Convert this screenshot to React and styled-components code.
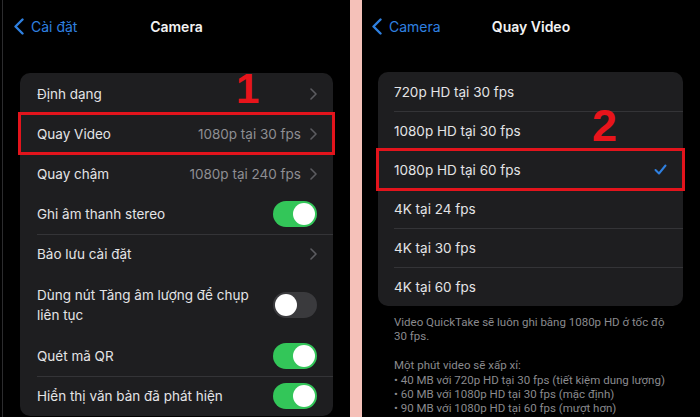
import React from "react";
import styled, { createGlobalStyle } from "styled-components";

const GlobalStyle = createGlobalStyle`
  html, body {
    margin: 0;
    padding: 0;
    background: #000;
  }
  body {
    font-family: "Inter", "Liberation Sans", sans-serif;
    -webkit-font-smoothing: antialiased;
  }
`;

const Page = styled.div`
  display: flex;
  width: 700px;
  height: 417px;
  overflow: hidden;
  background: #000;
`;

const Screen = styled.div`
  position: relative;
  width: ${(p) => p.width}px;
  flex-shrink: 0;
  box-sizing: border-box;
  background: #000;
  border-left: ${(p) => (p.edge ? "1px solid #2c2c2e" : "none")};
  margin-left: ${(p) => (p.edge ? "2px" : "0")};
`;

const Content = styled.div`
  padding: 0 ${(p) => p.padRight}px 0 ${(p) => p.padLeft}px;
`;

const Divider = styled.div`
  width: 12px;
  flex-shrink: 0;
  background: #f5c1b9;
`;

const NavBar = styled.div`
  position: relative;
  height: 52px;
  display: flex;
  align-items: center;
  justify-content: center;
`;

const BackButton = styled.div`
  position: absolute;
  left: ${(p) => p.left}px;
  top: 0;
  height: 52px;
  display: flex;
  align-items: center;
  gap: 7px;
  color: #2f80e0;
  font-size: 14px;
`;

const Title = styled.div`
  color: #f2f2f2;
  font-size: 14px;
  font-weight: 600;
`;

const Card = styled.div`
  margin-top: ${(p) => p.top}px;
  background: #1e1e20;
  border-radius: 10px;
`;

const Row = styled.div`
  position: relative;
  display: flex;
  align-items: center;
  min-height: ${(p) => p.h}px;
  padding: 0 16px 0 ${(p) => p.padLeft}px;
  box-sizing: border-box;
  outline: ${(p) => (p.highlight ? "3px solid #e3141c" : "none")};
  outline-offset: ${(p) => (p.highlight ? "-1px" : "0")};
  z-index: ${(p) => (p.highlight ? 1 : 0)};

  & + &::before {
    content: "";
    position: absolute;
    top: 0;
    left: ${(p) => p.padLeft}px;
    right: 0;
    height: 1px;
    background: #343437;
  }
`;

const Label = styled.div`
  flex: 1;
  color: #e4e4e6;
  font-size: 13.5px;
  line-height: 20px;
  padding: ${(p) => (p.multi ? "9px 12px 9px 0" : "0")};
`;

const Value = styled.div`
  color: #8e8e93;
  font-size: 13.5px;
  margin-right: 9px;
`;

const Toggle = styled.div`
  position: relative;
  width: 44px;
  height: 26px;
  border-radius: 13px;
  background: ${(p) => (p.on ? "#33c659" : "#3a3a3d")};
  flex-shrink: 0;

  &::after {
    content: "";
    position: absolute;
    top: 2px;
    left: ${(p) => (p.on ? "20px" : "2px")};
    width: 22px;
    height: 22px;
    border-radius: 50%;
    background: #fff;
  }
`;

const Footer = styled.div`
  padding: 9px 20px 0 32px;
  color: #8a8a8e;
  font-family: "Roboto", "Liberation Sans", sans-serif;
  font-size: 11.5px;
  line-height: 14.2px;

  p {
    margin: 0 0 15px;
  }
`;

const Badge = styled.div`
  position: absolute;
  left: ${(p) => p.x}px;
  top: ${(p) => p.y}px;
  color: #e8141b;
  font-family: "Liberation Sans", sans-serif;
  font-weight: 700;
  font-size: ${(p) => p.size}px;
  line-height: 1;
`;

const Chevron = () => (
  <svg width="7" height="12" viewBox="0 0 7 12">
    <polyline points="1,1 6,6 1,11" fill="none" stroke="#5c5c60" strokeWidth="1.6" strokeLinecap="round" strokeLinejoin="round" />
  </svg>
);

const BackChevron = () => (
  <svg width="10" height="17" viewBox="0 0 10 17">
    <polyline points="8.5,1.5 1.5,8.5 8.5,15.5" fill="none" stroke="#2f80e0" strokeWidth="2.4" strokeLinecap="round" strokeLinejoin="round" />
  </svg>
);

const Check = () => (
  <svg width="13" height="11" viewBox="0 0 13 11">
    <polyline points="1.5,6 5,9.5 11.5,1.5" fill="none" stroke="#2f80e0" strokeWidth="2" strokeLinecap="round" strokeLinejoin="round" />
  </svg>
);

const cameraRows = [
  { label: "Định dạng", chevron: true, h: 41 },
  { label: "Quay Video", value: "1080p tại 30 fps", chevron: true, highlight: true, h: 39 },
  { label: "Quay chậm", value: "1080p tại 240 fps", chevron: true, h: 41 },
  { label: "Ghi âm thanh stereo", toggle: true, on: true, h: 40 },
  { label: "Bảo lưu cài đặt", chevron: true, h: 40 },
  { label: "Dùng nút Tăng âm lượng để chụp liên tục", toggle: true, on: false, multi: true, h: 62 },
  { label: "Quét mã QR", toggle: true, on: true, h: 40 },
  { label: "Hiển thị văn bản đã phát hiện", toggle: true, on: true, h: 40 },
];

const videoRows = [
  { label: "720p HD tại 30 fps" },
  { label: "1080p HD tại 30 fps" },
  { label: "1080p HD tại 60 fps", checked: true, highlight: true },
  { label: "4K tại 24 fps" },
  { label: "4K tại 30 fps" },
  { label: "4K tại 60 fps" },
];

export default function App() {
  return (
    <>
      <GlobalStyle />
      <Page>
        <Screen width={348} edge>
          <NavBar>
            <BackButton left={11}>
              <BackChevron />
              <span>Cài đặt</span>
            </BackButton>
            <Title>Camera</Title>
          </NavBar>
          <Content padLeft={17} padRight={17}>
            <Card top={21}>
              {cameraRows.map((r) => (
                <Row key={r.label} h={r.h} padLeft={17} highlight={r.highlight}>
                  <Label multi={r.multi}>{r.label}</Label>
                  {r.value && <Value>{r.value}</Value>}
                  {r.chevron && <Chevron />}
                  {r.toggle && <Toggle on={r.on} />}
                </Row>
              ))}
            </Card>
          </Content>
          <Badge x={233} y={68} size={42}>1</Badge>
        </Screen>
        <Divider />
        <Screen width={338}>
          <NavBar>
            <BackButton left={10}>
              <BackChevron />
              <span>Camera</span>
            </BackButton>
            <Title>Quay Video</Title>
          </NavBar>
          <Content padLeft={16} padRight={17}>
            <Card top={20}>
              {videoRows.map((r) => (
                <Row key={r.label} h={39} padLeft={16} highlight={r.highlight}>
                  <Label>{r.label}</Label>
                  {r.checked && <Check />}
                </Row>
              ))}
            </Card>
          </Content>
          <Footer>
            <p>Video QuickTake sẽ luôn ghi bằng 1080p HD ở tốc độ 30 fps.</p>
            <p>
              Một phút video sẽ xấp xỉ:
              <br />• 40 MB với 720p HD tại 30 fps (tiết kiệm dung lượng)
              <br />• 60 MB với 1080p HD tại 30 fps (mặc định)
              <br />• 90 MB với 1080p HD tại 60 fps (mượt hơn)
            </p>
          </Footer>
          <Badge x={230} y={103} size={45}>2</Badge>
        </Screen>
      </Page>
    </>
  );
}
